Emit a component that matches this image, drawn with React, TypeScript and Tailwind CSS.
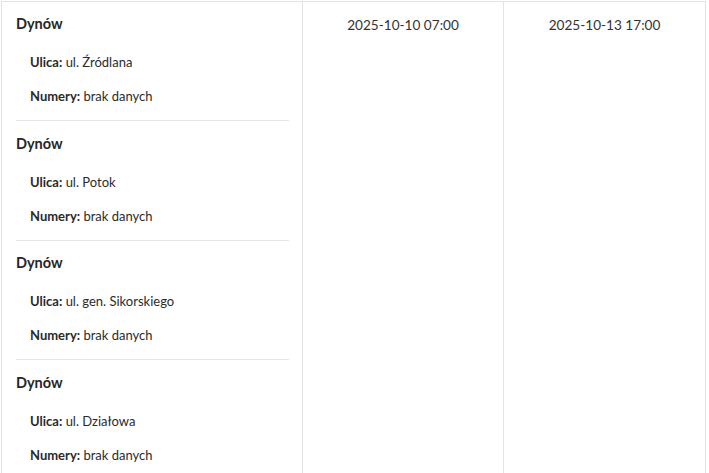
const rows = [
  { city: "Dynów", street: "ul. Źródlana" },
  { city: "Dynów", street: "ul. Potok" },
  { city: "Dynów", street: "ul. gen. Sikorskiego" },
  { city: "Dynów", street: "ul. Działowa" },
];

export default function App() {
  return (
    <div className="h-[473px] overflow-hidden bg-white pl-px pt-px font-['Lato',sans-serif] text-[#2b2b2b]">
      <div className="flex w-[705px] border-l border-t border-[#e3e3e3]">
        <div className="w-[301px] border-r border-[#e3e3e3] pl-[14px] pr-[13px]">
          {rows.map((r, i) => (
            <div key={i} className={i > 0 ? "border-t border-[#e5e5e5] pt-[12.5px]" : "pt-[12px]"}>
              <div className="h-[20px] text-[14.5px] font-bold leading-[20px] text-[#262626]">{r.city}</div>
              <div className="mt-[18px] h-[20px] pl-[14px] text-[13px] leading-[20px]">
                <span className="font-bold">Ulica:</span> {r.street}
              </div>
              <div className="mt-[14px] h-[20px] pl-[14px] text-[13px] leading-[20px]">
                <span className="font-bold">Numery:</span> brak danych
              </div>
              <div className="h-[14px]" />
            </div>
          ))}
        </div>
        <div className="w-[201px] border-r border-[#e3e3e3] pt-[13px] text-center text-[13.6px] leading-[20px] text-[#333]">
          2025-10-10 07:00
        </div>
        <div className="w-[202px] border-r border-[#e3e3e3] pt-[13px] text-center text-[13.6px] leading-[20px] text-[#333]">
          2025-10-13 17:00
        </div>
      </div>
    </div>
  );
}
